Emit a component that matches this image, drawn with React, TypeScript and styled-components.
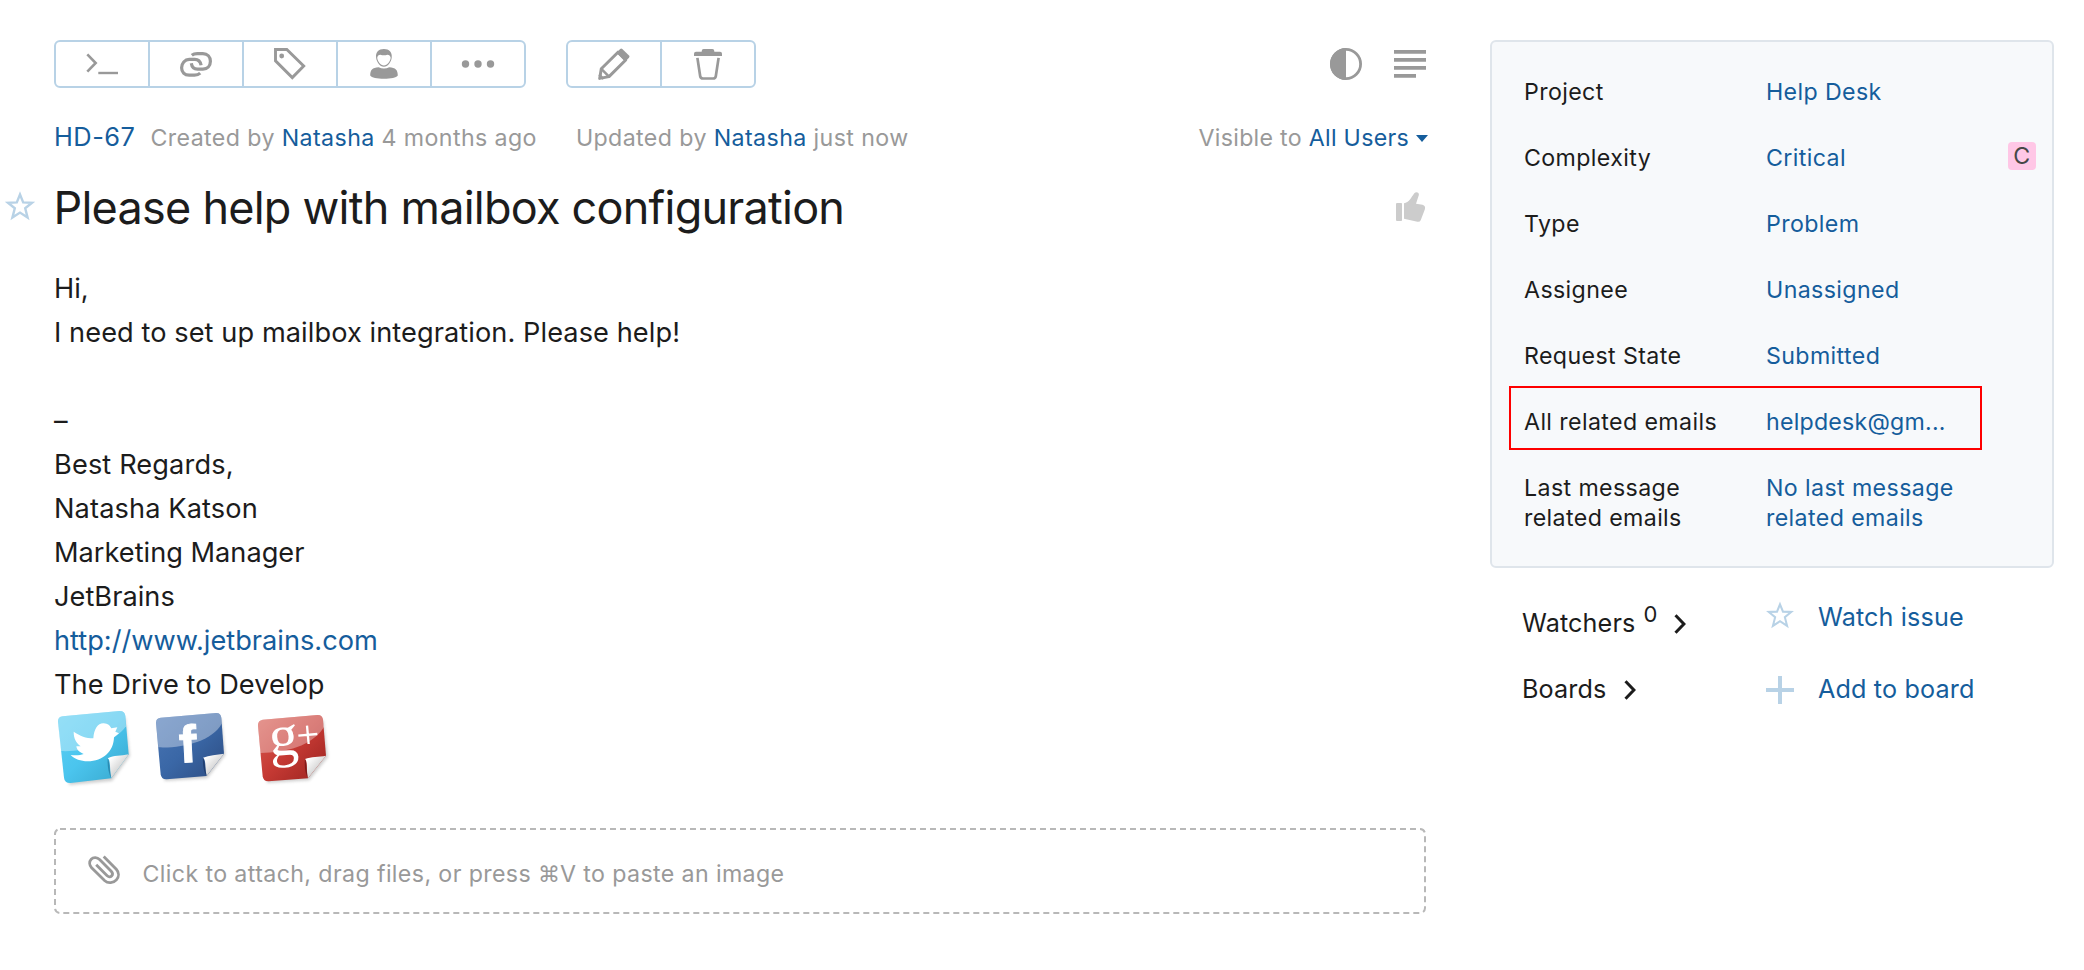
import React from "react";
import styled, { createGlobalStyle } from "styled-components";

const Global = createGlobalStyle`
  *, *::after { box-sizing: border-box; }
  body {
    margin: 0;
    background: #fff;
    color: #1c1c1c;
    font-family: Inter, "DejaVu Sans", sans-serif;
  }
`;

const LINK = "#155d9c";
const MUTED = "#999";
const LINE = "#b8d2e6";

const Page = styled.div`
  display: flex;
  align-items: flex-start;
  gap: 64px;
  padding: 40px 30px 0 54px;
`;

const Main = styled.main`
  width: 1372px;
  flex: none;
`;

const Toolbar = styled.div`
  display: flex;
  align-items: center;
  gap: 40px;
`;

const ButtonGroup = styled.div`
  display: flex;
  border: 2px solid ${LINE};
  border-radius: 6px;
`;

const ToolButton = styled.button`
  width: 94px;
  height: 44px;
  padding: 0;
  border: 0;
  border-right: 2px solid ${LINE};
  background: none;
  display: flex;
  align-items: center;
  justify-content: center;
  color: ${MUTED};

  &:last-child {
    width: 92px;
    border-right: 0;
  }
`;

const ViewOptions = styled.div`
  display: flex;
  gap: 32px;
  margin-left: auto;
  color: ${MUTED};
`;

const Icon = styled.svg`
  display: block;
  flex: none;
  overflow: visible;
`;

const Meta = styled.div`
  display: flex;
  align-items: baseline;
  height: 32px;
  margin-top: 34px;
  font-size: 23.2px;
  line-height: 30px;
  letter-spacing: 0.39px;
  color: ${MUTED};
  white-space: nowrap;
`;

const IssueId = styled.a`
  font-size: 25.4px;
  letter-spacing: 0.5px;
  color: ${LINK};
  margin-right: 15px;
`;

const Created = styled.span`
  margin-right: 39px;
`;

const Visibility = styled.span`
  display: flex;
  align-items: center;
  margin-left: auto;
  margin-right: -2px;
  letter-spacing: 0.28px;
  white-space: pre;
`;

const Caret = styled.span`
  margin-left: 7px;
  border: 6px solid transparent;
  border-top: 7px solid ${LINK};
  border-bottom: 0;
`;

const Link = styled.a`
  color: ${LINK};
`;

const TitleRow = styled.div`
  display: flex;
  align-items: center;
  margin: 26px 0 31px -49px;
  height: 56px;
`;

const Title = styled.h1`
  margin: 0 auto 0 18.5px;
  font-size: 45px;
  font-weight: 400;
  line-height: 56px;
  letter-spacing: -0.76px;
  white-space: nowrap;
`;

const TitleStar = styled.span`
  margin-top: -5px;
`;

const Thumb = styled.span`
  margin: -3px 1px 0 0;
`;

const Body = styled.div`
  font-size: 27.2px;
  line-height: 44px;
`;

const Paragraph = styled.div<{ $spacing?: number }>`
  height: 44px;
  letter-spacing: ${(p) => p.$spacing ?? 0.03}px;
`;

const Socials = styled.div`
  display: flex;
  height: 80px;
`;

const Sticker = styled(Icon)<{ $gap?: number }>`
  margin-right: ${(p) => p.$gap ?? 0}px;
`;

const Attach = styled.div`
  display: flex;
  height: 86px;
  margin-top: 41px;
  font-size: 23.2px;
  line-height: 30px;
  letter-spacing: 0.38px;
  color: ${MUTED};
  position: relative;
  padding: 27px 34px;
`;

const DashFrame = styled(Icon)`
  position: absolute;
  left: 0;
  top: 0;
`;

const AttachText = styled.span`
  margin: 4px 0 0 22.5px;
  white-space: nowrap;
`;

const CommandKey = styled.span`
  font-family: "DejaVu Sans", sans-serif;
  font-size: 22px;
  letter-spacing: 0;
`;

const Sidebar = styled.aside`
  width: 564px;
  flex: none;
`;

const Panel = styled.div`
  display: flex;
  flex-direction: column;
  gap: 36px;
  padding: 35px 16px 33px 32px;
  border: 2px solid #dfe5eb;
  border-radius: 6px;
  background: #f7f9fb;
  font-size: 23.2px;
  line-height: 30px;
  letter-spacing: 0.38px;
`;

const Field = styled.div<{ $highlighted?: boolean }>`
  display: grid;
  grid-template-columns: 242px 1fr auto;
  position: relative;

  ${(p) =>
    p.$highlighted &&
    `&::after {
      content: "";
      position: absolute;
      left: -15px;
      top: -21px;
      width: 473px;
      height: 64px;
      border: 2px solid #fe0000;
    }`}
`;

const FieldName = styled.span`
  white-space: pre-line;
`;

const FieldValue = styled.a<{ $tight?: boolean }>`
  color: ${LINK};
  white-space: pre-line;
  letter-spacing: ${(p) => (p.$tight ? "0.22px" : "inherit")};
`;

const Badge = styled.span`
  width: 28px;
  height: 28px;
  margin-top: -1px;
  border-radius: 4px;
  background: #ffc7e6;
  color: #474747;
  line-height: 28px;
  text-align: center;
`;

const Extras = styled.div`
  display: grid;
  grid-template-columns: 244px 1fr;
  row-gap: 34px;
  margin-top: 33px;
  padding-left: 32px;
  font-size: 25.2px;
  line-height: 32px;
  letter-spacing: 0.13px;
`;

const Section = styled.div<{ $drop?: number }>`
  display: flex;
  height: 32px;
  margin-top: ${(p) => p.$drop ?? 0}px;
`;

const Count = styled.span`
  margin: -9px 0 0 8px;
  font-size: 22px;
`;

const SectionArrow = styled(Icon)`
  margin: 7px 0 0 17px;
`;

const Action = styled.a`
  display: flex;
  gap: 24px;
  height: 32px;
  color: ${LINK};
`;

const CommandIcon = () => (
  <Icon width="32" height="32" fill="none" stroke="currentColor">
    <path d="M1.3 6.3 9.7 15 1.3 23.7" strokeWidth="2.6" />
    <path d="M12.3 25h19.7" strokeWidth="2.4" />
  </Icon>
);

const LinkIcon = () => (
  <Icon width="32" height="32" fill="none" stroke="currentColor" strokeWidth="3.2">
    <path d="M20.2 25.2C18.6 26.7 16.7 27.2 14.5 27.2H9.2C4.4 27.2 1.6 24 1.6 19.7S4.8 11.4 9.2 11.4h5.6c3.4 0 5.6 2.200 6.300 5.900" />
    <path d="M11.800 7.300C13.400 6 15 5.600 17.300 5.600h5.600c4.600 0 7.500 3.300 7.500 7.700s-3 7.800-7.500 7.800h-5.400c-3.400 0-5.700-2.400-6.200-5.900" />
  </Icon>
);

const TagIcon = () => (
  <Icon width="32" height="32">
    <path
      d="M1.5 1.5H12.8L29.7 18 18.3 29.6 1.5 12.8Z"
      fill="none"
      stroke="currentColor"
      strokeWidth="2.9"
    />
    <circle cx="7.7" cy="8" r="2.4" fill="currentColor" />
  </Icon>
);

const UserIcon = () => (
  <Icon width="32" height="32" fill="currentColor">
    <path d="M8.1 9.5C7.5 4.2 10.6 1 15.9 1s8.4 3.2 7.8 8.5c-.4 4.4-3.7 9.200-7.800 9.200S8.500 13.900 8.100 9.500Z" />
    <path
      d="M9.200 9.800C9.600 7.800 10.600 6.700 12.400 6.700c2.300.7 4.700.7 7 0 1.800 0 2.900 1.100 3.300 3.100-.4 3.700-3.400 7.800-6.800 7.800S9.600 13.500 9.200 9.800Z"
      fill="#fff"
    />
    <path d="M2.200 27.500c0-5.500 2-8 8.500-8.300 3.300 1.700 7.200 1.700 10.500 0 6.400.3 8.600 2.800 8.600 8.300-1.400 2.200-7 3.200-13.800 3.200s-12.400-1-13.800-3.200Z" />
  </Icon>
);

const MoreIcon = () => (
  <Icon width="32" height="32" fill="currentColor">
    <circle cx="3.5" cy="16" r="3.7" />
    <circle cx="16" cy="16" r="3.7" />
    <circle cx="28.5" cy="16" r="3.7" />
  </Icon>
);

const PencilIcon = () => (
  <Icon width="32" height="32" fill="none" stroke="currentColor" strokeWidth="3">
    <path d="M3.300 20.800 20 4.200 27.700 12 11 28.600 1.700 30.400Z" strokeLinejoin="round" />
    <path d="M3.300 20.800 11 28.600" strokeWidth="2.600" />
    <path d="M1.200 26.500 5.500 31" strokeWidth="2.400" />
    <path
      d="M18.500 4.800 22.200.9Q23.200-.1 24.300.9L31 7.600Q32.100 8.700 31 9.800L27.200 13.500Z"
      fill="currentColor"
      stroke="none"
    />
  </Icon>
);

const TrashIcon = () => (
  <Icon width="32" height="32" fill="currentColor">
    <path d="M2 8V5.800Q2 3.800 4 3.800H9.700V3Q9.700 1 11.700 1H20.300Q22.300 1 22.300 3V3.800H28Q30 3.800 30 5.800V8Z" />
    <path
      d="M5.400 9.900 8.200 28.200Q8.600 30.500 11 30.500H21Q23.400 30.500 23.800 28.200L26.600 9.900"
      fill="none"
      stroke="currentColor"
      strokeWidth="2.700"
    />
  </Icon>
);

const ContrastIcon = () => (
  <Icon width="32" height="32">
    <circle cx="16" cy="16" r="14.600" fill="none" stroke="currentColor" strokeWidth="2.800" />
    <path d="M16 0a16 16 0 0 0 0 32Z" fill="currentColor" />
  </Icon>
);

const LinesIcon = () => (
  <Icon width="32" height="32" fill="currentColor">
    <path d="M0 2h32v3.800H0zM0 10h32v3.800H0zM0 18h32v3.800H0zM0 26h22v3.800H0z" />
  </Icon>
);

const ThumbIcon = () => (
  <Icon width="29" height="30" fill="#ccc">
    <path d="M1 11H5.300Q6 11 6 12V28Q6 29 5.300 29H1Q0 29 0 28V12Q0 11 1 11Z" />
    <path d="M8 11.300C13 10.800 15 5.600 18.300 1.300 20-.9 23.600.3 22.800 3.300L20 11.700 26.500 12.800Q30 14 28.800 17.500L24.800 28Q24 30.200 21.400 29.800L8 26.800Z" />
  </Icon>
);

const Star = ({ size, stroke }: { size: number; stroke: number }) => (
  <Icon width={size} height={size * 0.95} viewBox="0 0 30 28.500" fill="none">
    <path
      d="M15 3.500 18.200 11.400 27 11.800 20.200 17.300 22.600 26.600 15 21.600 7.400 26.600 9.800 17.300 3 11.800 11.800 11.400Z"
      stroke={LINE}
      strokeWidth={stroke}
    />
  </Icon>
);

const Plus = () => (
  <Icon width="28" height="32" fill={LINE}>
    <path d="M12 3h4v28h-4zM0 15h28v4H0z" />
  </Icon>
);

const Arrow = () => (
  <SectionArrow width="12" height="20" fill="none" stroke="#1c1c1c" strokeWidth="3">
    <path d="M1.500 1.200 9.900 10 1.500 18.800" />
  </SectionArrow>
);

const ClipIcon = () => (
  <Icon width="32" height="30" fill="none" stroke="currentColor" strokeWidth="2.800">
    <path d="M15.700 1.500 28.300 14.300C31 17.300 31.300 21.500 28.400 24.800S20 28.600 16.800 25.700L3.600 12.700C1.200 10 1 6.600 3.200 4.200S9.300 2.200 11.600 4.400L23.200 16.200C24.800 18 24.800 19.800 23.600 21S20.300 22 18.900 20.600L8.200 9.800" />
  </Icon>
);

const TwitterSticker = () => (
  <Sticker width="80" height="80" viewBox="42 48 240 240" $gap={18}>
    <defs>
      <linearGradient id="tw" x1="0" y1="0" x2="1" y2="1">
        <stop offset="0" stopColor="#5fcff3" />
        <stop offset=".5" stopColor="#4bc5ee" />
        <stop offset="1" stopColor="#37a6cb" />
      </linearGradient>
      <linearGradient id="curl" x1="0" y1="0" x2="1" y2="1">
        <stop offset=".15" stopColor="#fff" />
        <stop offset=".6" stopColor="#d4d4d4" />
      </linearGradient>
      <filter id="soft" x="-20%" y="-20%" width="140%" height="140%">
        <feGaussianBlur stdDeviation="4" />
      </filter>
    </defs>
    <path d="M62 100 256 80 270 194 216 270 88 282Z" fill="#777" opacity=".35" filter="url(#soft)" />
    <path d="M54 92Q53 78 68 76L238 60Q254 59 256 74L266 190 214 262 92 276Q74 277 72 260Z" fill="url(#tw)" />
    <path d="M54 92Q53 78 68 76L238 60Q254 59 256 74L258 106C220 158 130 184 62 180Z" fill="#fff" opacity=".34" />
    <path
      d="M101 122C120 135 138 142 160 142C162 113 174 96 191 97C204 98 210 104 214 112L232 109 226 122 237 127 222 139C221 181 190 211 143 211C122 210 104 205 92 192C108 194 121 193 131 189C119 184 111 178 109 166L122 166C108 155 101 143 101 122Z"
      fill="#fff"
    />
    <path d="M266 190 214 262C208 235 213 208 203 202C222 193 242 195 266 190Z" fill="url(#curl)" />
    <path d="M214 262C208 240 210 212 203 202C202 220 204 244 214 262Z" fill="#1c6c94" opacity=".6" />
  </Sticker>
);

const FacebookSticker = () => (
  <Sticker width="80" height="80" viewBox="336 48 240 240" $gap={22}>
    <defs>
      <linearGradient id="fb" x1="0" y1="0" x2="1" y2="1">
        <stop offset="0" stopColor="#4a76b5" />
        <stop offset=".5" stopColor="#3a67a6" />
        <stop offset="1" stopColor="#2c4b80" />
      </linearGradient>
    </defs>
    <path d="M354 100 544 84 556 192 502 262 374 270Z" fill="#777" opacity=".35" filter="url(#soft)" />
    <path d="M348 96Q347 82 362 80L528 66Q542 65 544 80L552 188 500 255 380 265Q364 266 362 250Z" fill="url(#fb)" />
    <path d="M348 96Q347 82 362 80L528 66Q542 65 544 80L545 98C516 150 430 172 355 169Z" fill="#fff" opacity=".36" />
    <text
      x="417"
      y="214"
      fontFamily="Liberation Sans, sans-serif"
      fontSize="158"
      fontWeight="700"
      fill="#fff"
      stroke="#fff"
      strokeWidth="3"
      transform="rotate(-3 446 160)"
    >
      f
    </text>
    <path d="M552 188 500 255C494 230 499 206 489 200C508 192 530 192 552 188Z" fill="url(#curl)" />
    <path d="M500 255C494 236 496 210 489 200C488 218 490 240 500 255Z" fill="#132c58" opacity=".6" />
  </Sticker>
);

const GoogleSticker = () => (
  <Sticker width="80" height="80" viewBox="642 48 240 240">
    <defs>
      <linearGradient id="gp" x1="0" y1="0" x2="1" y2="1">
        <stop offset="0" stopColor="#d85f55" />
        <stop offset=".5" stopColor="#c63a34" />
        <stop offset="1" stopColor="#99221f" />
      </linearGradient>
    </defs>
    <path d="M660 106 850 88 864 198 808 268 682 276Z" fill="#777" opacity=".35" filter="url(#soft)" />
    <path d="M654 104Q653 89 668 86L832 72Q847 71 849 86L858 194 804 262 686 271Q670 272 668 256Z" fill="url(#gp)" />
    <path d="M654 104Q653 89 668 86L832 72Q847 71 849 86L852 108C816 166 738 184 661 186Z" fill="#fff" opacity=".34" />
    <text
      x="688"
      y="192"
      fontFamily="Liberation Serif, serif"
      fontSize="176"
      fill="#fff"
      transform="rotate(-4 730 168)"
    >
      g
    </text>
    <path d="M775 134 832 129M801 104 806 159" stroke="#fff" strokeWidth="7" />
    <path d="M858 194 804 262C798 236 804 212 795 204C814 196 836 198 858 194Z" fill="url(#curl)" />
    <path d="M804 262C798 240 802 216 795 204C793 224 795 246 804 262Z" fill="#5d0f10" opacity=".6" />
  </Sticker>
);

const fields = [
  { name: "Project", value: "Help Desk" },
  { name: "Complexity", value: "Critical", badge: "C" },
  { name: "Type", value: "Problem" },
  { name: "Assignee", value: "Unassigned" },
  { name: "Request State", value: "Submitted" },
  { name: "All related emails", value: "helpdesk@gm...", highlighted: true },
  { name: "Last message\nrelated emails", value: "No last message\nrelated emails" },
];

export default function App() {
  return (
    <Page>
      <Global />
      <Main>
        <Toolbar>
          <ButtonGroup>
            <ToolButton><CommandIcon /></ToolButton>
            <ToolButton><LinkIcon /></ToolButton>
            <ToolButton><TagIcon /></ToolButton>
            <ToolButton><UserIcon /></ToolButton>
            <ToolButton><MoreIcon /></ToolButton>
          </ButtonGroup>
          <ButtonGroup>
            <ToolButton><PencilIcon /></ToolButton>
            <ToolButton><TrashIcon /></ToolButton>
          </ButtonGroup>
          <ViewOptions>
            <ContrastIcon />
            <LinesIcon />
          </ViewOptions>
        </Toolbar>

        <Meta>
          <IssueId>HD-67</IssueId>
          <Created>
            Created by <Link>Natasha</Link> 4 months ago
          </Created>
          <span>
            Updated by <Link>Natasha</Link> just now
          </span>
          <Visibility>
            Visible to <Link>All Users</Link>
            <Caret />
          </Visibility>
        </Meta>

        <TitleRow>
          <TitleStar><Star size={30} stroke={2.4} /></TitleStar>
          <Title>Please help with mailbox configuration</Title>
          <Thumb><ThumbIcon /></Thumb>
        </TitleRow>

        <Body>
          <Paragraph>Hi,</Paragraph>
          <Paragraph $spacing={0.07}>I need to set up mailbox integration. Please help!</Paragraph>
          <Paragraph />
          <Paragraph>–</Paragraph>
          <Paragraph $spacing={0.12}>Best Regards,</Paragraph>
          <Paragraph $spacing={0.12}>Natasha Katson</Paragraph>
          <Paragraph $spacing={0}>Marketing Manager</Paragraph>
          <Paragraph>JetBrains</Paragraph>
          <Paragraph $spacing={0}><Link>http://www.jetbrains.com</Link></Paragraph>
          <Paragraph>The Drive to Develop</Paragraph>
          <Socials>
            <TwitterSticker />
            <FacebookSticker />
            <GoogleSticker />
          </Socials>
        </Body>

        <Attach>
          <DashFrame width="1372" height="86" fill="none">
            <rect x="1" y="1" width="1370" height="84" rx="5" stroke="#b8b8b8" strokeWidth="2" strokeDasharray="6 4" />
          </DashFrame>
          <ClipIcon />
          <AttachText>
            Click to attach, drag files, or press <CommandKey>⌘</CommandKey>V to paste an image
          </AttachText>
        </Attach>
      </Main>

      <Sidebar>
        <Panel>
          {fields.map((f) => (
            <Field key={f.name} $highlighted={f.highlighted}>
              <FieldName>{f.name}</FieldName>
              <FieldValue $tight={f.highlighted}>{f.value}</FieldValue>
              {f.badge && <Badge>{f.badge}</Badge>}
            </Field>
          ))}
        </Panel>
        <Extras>
          <Section $drop={6}>
            Watchers<Count>0</Count>
            <Arrow />
          </Section>
          <Action>
            <Star size={28} stroke={2.2} />
            Watch issue
          </Action>
          <Section>
            Boards
            <Arrow />
          </Section>
          <Action>
            <Plus />
            Add to board
          </Action>
        </Extras>
      </Sidebar>
    </Page>
  );
}
